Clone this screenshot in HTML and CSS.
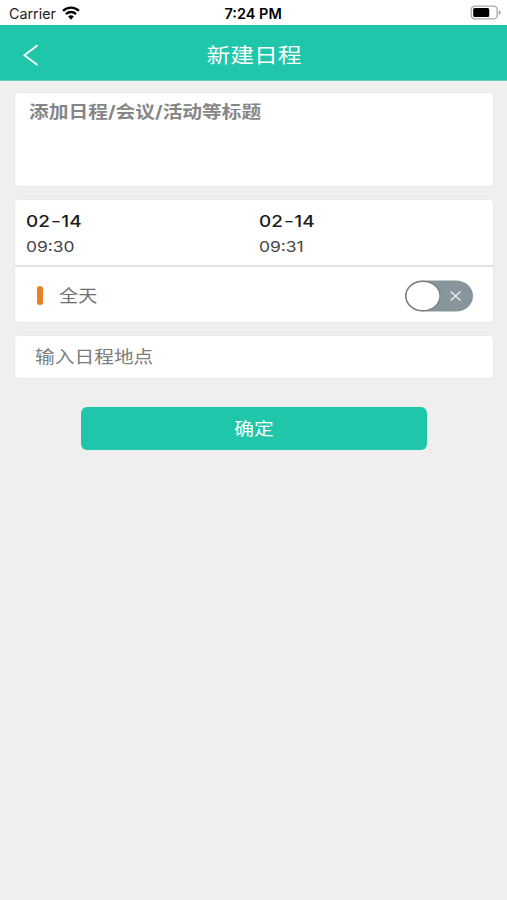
FILE: index.html
```html
<!DOCTYPE html>
<html lang="zh-CN">
<head>
<meta charset="utf-8">
<title>新建日程</title>
<link rel="stylesheet" href="styles.css">
</head>
<body>
<div class="status">
  <div class="carrier"><span class="carrier-name">Carrier</span>
    <svg class="wifi" width="18" height="14" viewBox="0 0 20 15" preserveAspectRatio="none" fill="none" stroke="#000" stroke-width="2.6"><path d="M1.2 5.3C6 .6 14 .6 18.8 5.3M4.4 8.6c3.1-2.9 8.1-2.9 11.2 0"/><path d="M6.8 11.3c2-1.7 4.4-1.7 6.4 0L10 14.6z" fill="#000" stroke="none"/></svg>
  </div>
  <span class="clock">7:24 PM</span>
  <svg class="battery" width="32" height="16" viewBox="0 0 32 16"><rect x="1.2" y="1.2" width="26" height="12.6" rx="3.6" fill="#fff" stroke="#aaa" stroke-width="1.3"/><rect x="3.2" y="3" width="16" height="9" rx="1.6"/><path d="M28.8 5.2c2.4 1 2.4 3.6 0 4.6z" fill="#999"/></svg>
</div>
<header class="nav">
  <svg class="back" width="18" height="24" viewBox="0 0 18 24" fill="none" stroke="#fff" stroke-width="1.8"><path d="M15.5 2.2L2.4 12.2l13.1 9.8"/></svg>
  <h1 class="title">新建日程</h1>
</header>
<main class="form">
  <section class="card subject"><span class="text hint-bold">添加日程/会议/活动等标题</span></section>
  <section class="card schedule">
    <div class="times">
      <div class="time"><span class="text date">02<span class="dash">-</span>14</span><span class="text hour">09:30</span></div>
      <div class="time"><span class="text date">02<span class="dash">-</span>14</span><span class="text hour">09:31</span></div>
    </div>
    <div class="allday">
      <span class="mark"></span><span class="text label">全天</span>
      <svg class="switch" width="70" height="34" viewBox="0 0 70 34"><rect x="1" y="1.5" width="68" height="31" rx="17" ry="15.5" fill="#86969c"/><ellipse cx="19" cy="17" rx="17" ry="14.7" fill="#fff" stroke="#777b7d" stroke-width="1.2"/><path d="M46.6 12.4l10 9.2m0-9.2l-10 9.2" stroke="#eef2f3" stroke-width="1.3"/></svg>
    </div>
  </section>
  <section class="card place"><span class="text hint">输入日程地点</span></section>
  <button class="confirm"><span class="confirm-text">确定</span></button>
</main>
</body>
</html>
```
FILE: styles.css
```css
* { box-sizing: border-box; }
body {
  margin: 0;
  min-height: 900px;
  background: #efeff0;
  font-family: Inter, "Noto Sans CJK SC", sans-serif;
}
.status {
  height: 25px;
  padding: 0 5px 0 9px;
  background: #fff;
  display: grid;
  grid-template-columns: 1fr 58px 1fr;
  column-gap: 6px;
  align-items: center;
  color: #000;
}
.carrier { display: flex; align-items: center; gap: 5px; font-size: 14.3px; color: #222; }
.carrier-name { width: 48px; line-height: 18px; padding-top: 2px; }
.clock {
  margin-left: -2px;
  font-size: 14.5px;
  font-weight: 600;
  line-height: 18px;
  padding-top: 2px;
  white-space: nowrap;
}
.battery { justify-self: end; margin-top: 1px; }
.nav {
  height: 56px;
  padding: 3px 22px 0;
  background: #1fc6aa;
  border-bottom: 1px solid #5fd3c0;
  display: grid;
  grid-template-columns: 1fr auto 1fr;
  align-items: center;
}
.back { margin-top: 2px; }
.title {
  margin: 4px 0 0;
  color: #fff;
  font-size: 20.5px;
  line-height: 30px;
  font-weight: 400;
  transform: scaleX(1.16);
}
.form { padding: 11px 13px 0 14px; display: flex; flex-direction: column; }
.card {
  background: #fff;
  border: 1px solid #e9e9e9;
  border-radius: 4px;
  margin-bottom: 12px;
}
.text { display: block; width: fit-content; white-space: nowrap; transform: scaleX(1.16); transform-origin: left center; }
.subject { height: 95px; padding: 6px 14px; }
.hint-bold { font-size: 17px; line-height: 26px; font-weight: 700; color: #868686; }
.schedule { height: 124px; }
.times {
  height: 67px;
  padding: 8px 11px 0;
  border-bottom: 2px solid #e3e3e3;
  display: grid;
  grid-template-columns: 233px 1fr;
}
.date { font-size: 16.3px; line-height: 26px; font-weight: 450; color: #1c1c1c; }
.dash { display: inline-block; margin: 0 1.2px; font-weight: 400; transform: scaleX(1.2); }
.hour { font-size: 15px; line-height: 26px; color: #444; }
.allday { height: 56px; padding: 1px 19px 0 22px; display: flex; align-items: center; }
.mark { width: 6px; height: 19px; border-radius: 3px; background: #e98026; }
.label { margin-left: 16px; font-size: 16.5px; line-height: 26px; color: #6f6f6f; }
.switch { margin-left: auto; }
.place { height: 44px; padding: 8px 20px; }
.hint { font-size: 17px; line-height: 26px; color: #7c7c7c; }
.confirm {
  width: 346px;
  height: 43px;
  margin: 16px 0 0 67px;
  padding: 0;
  border: 0;
  border-radius: 6px;
  background: #1fc6aa;
  color: #fff;
  font: 400 17px/26px Inter, "Noto Sans CJK SC", sans-serif;
}
.confirm-text { display: inline-block; transform: scaleX(1.16); }
```
